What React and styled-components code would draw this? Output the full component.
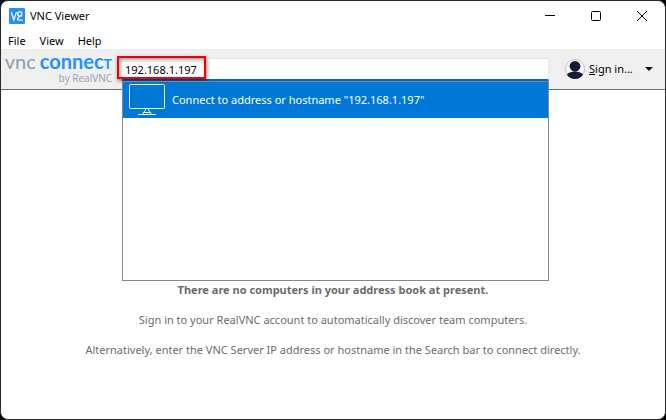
import React, { useState } from "react";
import styled, { createGlobalStyle } from "styled-components";

const GlobalStyle = createGlobalStyle`
  *, *::before, *::after { box-sizing: border-box; }
  body { margin: 0; background: #000; }
`;

const Window = styled.div`
  display: flex;
  flex-direction: column;
  min-height: 100vh;
  overflow: hidden;
  border: 1px solid #2b2a2b;
  border-radius: 8px;
  background: #fff;
  color: #000;
  font: 11px/16px "Noto Sans", "Open Sans", sans-serif;
`;

const TitleBar = styled.header`
  display: flex;
  align-items: center;
  height: 30px;
  padding-left: 8px;
`;

const Title = styled.h1`
  flex: 1;
  margin: 0 0 0 5px;
  font-size: 11px;
  font-weight: 400;
`;

const CaptionButton = styled.button`
  display: flex;
  align-items: center;
  justify-content: center;
  width: 46px;
  height: 30px;
  padding: 0;
  border: 0;
  background: none;
`;

const MenuBar = styled.nav`
  display: flex;
  height: 18px;
`;

const MenuButton = styled.button`
  padding: 0 7px;
  border: 0;
  background: none;
  color: inherit;
  font: inherit;
  line-height: 20px;
`;

const Toolbar = styled.div`
  display: flex;
  height: 41px;
  border-bottom: 1px solid #6b6b6b;
  background: #efefef;
`;

const Brand = styled.div`
  display: flex;
  flex-direction: column;
  align-items: flex-end;
  width: 121px;
  padding: 3px 10px 0 0;
  white-space: nowrap;
`;

const Wordmark = styled.div`
  display: flex;
  align-items: baseline;
  gap: 4px;
  font: 400 20px/18px "Lato", sans-serif;
  color: #8d9bb0;
`;

const BrandName = styled.span`
  color: #288ff8;
  font-weight: 700;
`;

const SmallCap = styled.span`
  font-size: 14px;
`;

const Byline = styled.div`
  color: #919eb3;
  font: 10px/10px "Open Sans", sans-serif;
`;

const Search = styled.div`
  position: relative;
  flex: 1;
  padding-top: 9px;
`;

const AddressInput = styled.input`
  display: block;
  width: 100%;
  height: 23px;
  padding: 0 3px;
  border: solid #dfe7ee;
  border-width: 1px 1px 2px 0;
  border-bottom-color: #0067c0;
  border-radius: 0;
  outline: 0;
  background: #fff;
  color: #000;
  font: inherit;
`;

const Highlight = styled.div`
  position: absolute;
  top: 7px;
  left: -5px;
  width: 89px;
  height: 23px;
  border: 2px solid #f00008;
  box-shadow: 1px 2px 4px rgba(0, 0, 0, 0.5), inset 1px 2px 4px rgba(0, 0, 0, 0.35);
  pointer-events: none;
`;

const Suggestions = styled.ul`
  position: absolute;
  z-index: 1;
  top: 32px;
  left: 0;
  width: 100%;
  height: 200px;
  margin: 0;
  padding: 0;
  border: 1px solid #828790;
  background: #fff;
  list-style: none;
`;

const Suggestion = styled.li`
  display: flex;
  align-items: center;
  gap: 7px;
  height: 36px;
  padding-left: 5px;
  background: #0078d7;
  color: #fff;
  white-space: nowrap;
`;

const Account = styled.div`
  display: flex;
  align-items: center;
  width: 116px;
  padding-left: 16px;
`;

const SignIn = styled.button`
  display: flex;
  flex: 1;
  align-items: center;
  gap: 4px;
  padding: 0;
  border: 0;
  background: none;
  color: #000;
  font: inherit;
  white-space: nowrap;
`;

const Arrow = styled.button`
  display: flex;
  margin-right: 8px;
  padding: 4px;
  border: 0;
  background: none;
`;

const AddressBook = styled.main`
  display: flex;
  flex: 1;
  flex-direction: column;
  gap: 14px;
  padding: 192px 16px 24px;
  color: #6b6b6b;
  text-align: center;
`;

const Message = styled.p`
  margin: 0;
  font-weight: ${(p) => (p.$strong ? 700 : 400)};
`;

const AppIcon = () => (
  <svg width="16" height="16" viewBox="0 0 16 16" aria-hidden="true">
    <rect width="16" height="16" rx="1" fill="#288ff8" />
    <path d="M2.3 4l2.500 8L7.500 4" fill="none" stroke="#fff" strokeWidth="1.200" />
    <path
      d="M12.800 8H10.500C8 8 8 3.800 10.800 3.800c2.800 0 2.600 3 .6 4.200-1.600 1-2.900 1.500-2.900 2.900 0 1.100 1 1.300 2 1.300h3"
      fill="none"
      stroke="#fff"
      strokeWidth="1.200"
    />
  </svg>
);

const Monitor = () => (
  <svg width="37" height="33" viewBox="0 0 37 33" fill="none" stroke="#e6f3ff" aria-hidden="true">
    <rect x="1.500" y="0.500" width="35" height="24" rx="1" />
    <path d="M18 25l-4 6M20 25l4 6M10 30.500h18M15 28.500h8" />
  </svg>
);

const Avatar = () => (
  <svg width="20" height="20" viewBox="0 0 20 20" aria-hidden="true">
    <circle cx="10" cy="10" r="9.500" fill="#f6f6f6" stroke="#c3c3c8" />
    <circle cx="10" cy="7.300" r="5.400" fill="#191a35" />
    <path d="M1.800 15.500C4 13.400 7 12.600 10 12.600s6 .8 8.200 2.900A10 10 0 0 1 10 20a10 10 0 0 1-8.200-4.500z" fill="#191a35" />
  </svg>
);

export default function App() {
  const [address, setAddress] = useState("192.168.1.197");
  return (
    <>
      <GlobalStyle />
      <Window>
        <TitleBar>
          <AppIcon />
          <Title>VNC Viewer</Title>
          <CaptionButton aria-label="Minimize">
            <svg width="10" height="10" stroke="#000"><path d="M0 4.500h10" /></svg>
          </CaptionButton>
          <CaptionButton aria-label="Maximize">
            <svg width="10" height="10" fill="none" stroke="#000"><rect x=".5" y=".5" width="9" height="9" rx="1" /></svg>
          </CaptionButton>
          <CaptionButton aria-label="Close">
            <svg width="10" height="10" stroke="#000"><path d="M0 0l10 10M10 0L0 10" /></svg>
          </CaptionButton>
        </TitleBar>
        <MenuBar>
          <MenuButton>File</MenuButton>
          <MenuButton>View</MenuButton>
          <MenuButton>Help</MenuButton>
        </MenuBar>
        <Toolbar>
          <Brand>
            <Wordmark>
              <span>vnc</span>
              <BrandName>connec<SmallCap>T</SmallCap></BrandName>
            </Wordmark>
            <Byline>by RealVNC</Byline>
          </Brand>
          <Search>
            <AddressInput
              aria-label="VNC Server address or search"
              value={address}
              onChange={(e) => setAddress(e.target.value)}
            />
            <Highlight />
            <Suggestions>
              <Suggestion>
                <Monitor />
                Connect to address or hostname "{address}"
              </Suggestion>
            </Suggestions>
          </Search>
          <Account>
            <SignIn>
              <Avatar />
              <span><u>S</u>ign in...</span>
            </SignIn>
            <Arrow aria-label="Account menu">
              <svg width="8" height="4"><path d="M0 0h8L4 4z" fill="#111" /></svg>
            </Arrow>
          </Account>
        </Toolbar>
        <AddressBook>
          <Message $strong>There are no computers in your address book at present.</Message>
          <Message>Sign in to your RealVNC account to automatically discover team computers.</Message>
          <Message>Alternatively, enter the VNC Server IP address or hostname in the Search bar to connect directly.</Message>
        </AddressBook>
      </Window>
    </>
  );
}
